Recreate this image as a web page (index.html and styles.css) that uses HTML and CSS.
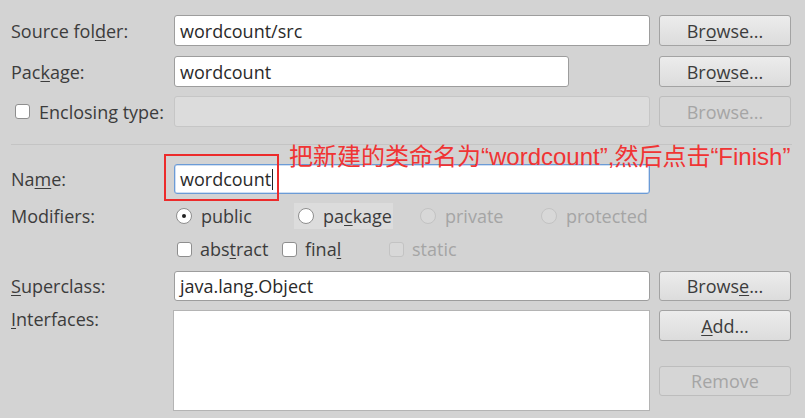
FILE: index.html
```html
<!DOCTYPE html>
<html>
<head>
<meta charset="utf-8">
<link rel="stylesheet" href="styles.css">
</head>
<body>
<div class="dialog">
  <div class="row r-src">
    <span class="lbl">Source fol<u>d</u>er:</span>
    <div class="input">wordcount/src</div>
    <div class="btn">Br<u>o</u>wse...</div>
  </div>
  <div class="row r-pkg">
    <span class="lbl">Pac<u>k</u>age:</span>
    <div class="input short">wordcount</div>
    <div class="btn">Bro<u>w</u>se...</div>
  </div>
  <div class="row r-enc">
    <span class="lbl check-lbl"><span class="box"></span>Enclosing type:</span>
    <div class="input disabled"></div>
    <div class="btn disabled">Browse...</div>
  </div>
  <div class="sep"></div>
  <div class="row r-name">
    <span class="lbl">Na<u>m</u>e:</span>
    <div class="input focused">wordcount<span class="caret"></span></div>
  </div>
  <div class="row r-mod1">
    <span class="lbl">Modifiers:</span>
    <div class="opts opts-radio">
      <span class="opt"><span class="radio on"></span>public</span>
      <span class="opt hover"><span class="radio"></span>pa<u>c</u>kage</span>
      <span class="opt dis"><span class="radio"></span>private</span>
      <span class="opt dis"><span class="radio"></span>protected</span>
    </div>
  </div>
  <div class="row r-mod2">
    <span class="lbl"></span>
    <div class="opts opts-check">
      <span class="opt"><span class="box"></span>abs<u>t</u>ract</span>
      <span class="opt"><span class="box"></span>fina<u>l</u></span>
      <span class="opt dis"><span class="box"></span>static</span>
    </div>
  </div>
  <div class="row r-super">
    <span class="lbl"><u>S</u>uperclass:</span>
    <div class="input">java.lang.Object</div>
    <div class="btn">Brows<u>e</u>...</div>
  </div>
  <div class="row r-int">
    <span class="lbl top"><u>I</u>nterfaces:</span>
    <div class="list"></div>
    <div class="btn-col">
      <div class="btn"><u>A</u>dd...</div>
      <div class="btn disabled">Remove</div>
    </div>
  </div>
  <div class="highlight-box"></div>
  <div class="note">把新建的类命名为“wordcount”,然后点击“Finish”</div>
</div>
</body>
</html>
```

FILE: styles.css
```css
html, body {
  margin: 0;
  padding: 0;
  background: #d3d3d3;
}
body {
  width: 805px;
  height: 418px;
  overflow: hidden;
  font-family: "Open Sans", "DejaVu Sans", sans-serif;
  font-size: 18px;
  color: #3c3c3c;
}
u { text-decoration: underline; text-underline-offset: 2px; text-decoration-thickness: 1px; }
.dialog {
  position: relative;
  padding: 15px 0 0 11px;
}
.row {
  display: grid;
  grid-template-columns: 154px 476px 132px;
  column-gap: 9px;
  align-items: center;
}
.r-src { height: 31px; }
.r-pkg { height: 31px; margin-top: 10px; }
.r-enc { height: 31px; margin-top: 9px; }
.sep {
  height: 1px;
  width: 781px;
  background: #c4c4c4;
  margin-top: 17px;
}
.r-name { height: 30px; margin-top: 19px; }
.r-mod1 { height: 26px; margin-top: 9px; }
.r-mod2 { height: 26px; margin-top: 7px; }
.r-super { height: 30px; margin-top: 9px; }
.r-int { margin-top: 9px; align-items: start; }

.lbl { white-space: nowrap; }
.lbl.top { line-height: 18px; }
.check-lbl { display: flex; align-items: center; padding-left: 4px; }
.check-lbl .box { margin-right: 9px; }

.input {
  box-sizing: border-box;
  height: 100%;
  background: #fff;
  border: 1px solid #9d9d9d;
  border-radius: 3px;
  padding: 0 5px;
  display: flex;
  align-items: center;
  color: #2a2a2a;
  white-space: nowrap;
}
.input.short { width: 395px; }
.input.disabled { background: #dcdcdc; border-color: #c6c6c6; }
.input.focused { border-color: #6b9bd6; box-shadow: inset 0 0 0 0.5px #9dbde6; }
.caret {
  display: inline-block;
  width: 1px;
  height: 21px;
  background: #222;
  margin-left: 1px;
}

.btn {
  box-sizing: border-box;
  height: 31px;
  border: 1px solid #a3a3a3;
  border-radius: 3px;
  background: linear-gradient(#ececec, #dcdcdc);
  display: flex;
  align-items: center;
  justify-content: center;
  color: #3c3c3c;
}
.r-super .btn { height: 30px; }
.btn.disabled {
  background: #d6d6d6;
  border-color: #bdbdbd;
  color: #a5a5a5;
}
.btn-col { display: flex; flex-direction: column; }
.btn-col .btn + .btn { margin-top: 25px; height: 30px; }
.list {
  box-sizing: border-box;
  height: 101px;
  background: #fff;
  border: 1px solid #b4b4b4;
  margin-left: -1px;
}

.opts { display: grid; align-items: center; height: 100%; grid-column: 2 / 4; }
.opts-radio { grid-template-columns: 120px 125px 121px auto; }
.opts-check { grid-template-columns: 108px 107px auto; }
.opt { display: flex; align-items: center; white-space: nowrap; height: 100%; }
.opt.dis { color: #a5a5a5; }
.opt.hover { background: #dcdcdc; width: 99px; box-sizing: border-box; padding-left: 4px; }
.opts-radio .opt:first-child { padding-left: 2px; }
.opts-radio .opt:nth-child(3), .opts-radio .opt:nth-child(4) { padding-left: 1px; }
.opts-check .opt:first-child { padding-left: 3px; }

.radio {
  box-sizing: border-box;
  width: 16px;
  height: 16px;
  border-radius: 50%;
  border: 1px solid #8e8e8e;
  background: #fff;
  margin-right: 9px;
  position: relative;
  flex: none;
}
.radio.on::after {
  content: "";
  position: absolute;
  left: 5px; top: 5px;
  width: 4px; height: 4px;
  border-radius: 50%;
  background: #222;
}
.opt.dis .radio { background: #d8d8d8; border-color: #c3c3c3; }
.box {
  box-sizing: border-box;
  width: 15px;
  height: 15px;
  border-radius: 3px;
  border: 1px solid #8e8e8e;
  background: #fff;
  margin-right: 8px;
  flex: none;
}
.opt.dis .box { background: #d8d8d8; border-color: #c3c3c3; }

.highlight-box {
  position: absolute;
  left: 164px;
  top: 154px;
  width: 115px;
  height: 47px;
  box-sizing: border-box;
  border: 2px solid #ec2b2b;
}
.note {
  position: absolute;
  left: 289px;
  top: 144px;
  font-family: "Liberation Sans", "Noto Sans CJK SC", sans-serif;
  font-size: 24px;
  line-height: 26px;
  color: #f03434;
  white-space: nowrap;
}
```
